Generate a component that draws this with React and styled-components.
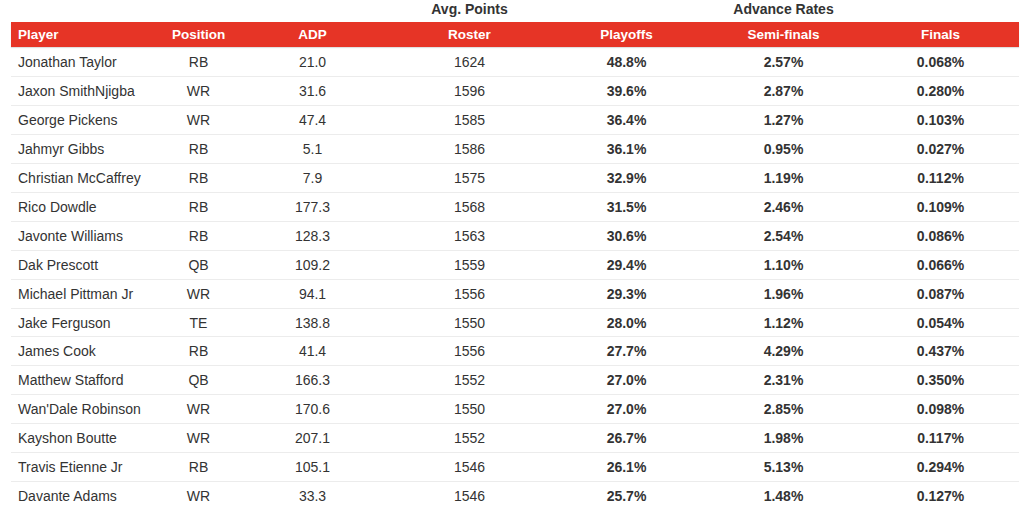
import React from "react";
import styled, { createGlobalStyle } from "styled-components";

const GlobalStyle = createGlobalStyle`
  html, body {
    margin: 0;
    padding: 0;
    background: #fff;
  }
  body {
    font-family: "Liberation Sans", Arial, Helvetica, sans-serif;
    color: #333;
  }
`;

const Wrapper = styled.div`
  padding: 0 5px 0 11px;
`;

const Table = styled.table`
  width: 1008px;
  border-collapse: collapse;
  table-layout: fixed;
  font-size: 14px;
`;

const GroupRow = styled.tr`
  height: 22px;
`;

const GroupCell = styled.th`
  padding: 0 0 5px;
  font-weight: bold;
  font-size: 14px;
  color: #333;
  text-align: center;
  vertical-align: middle;
`;

const HeadRow = styled.tr`
  height: 25px;
  background: #e63426;
  box-shadow: 0 1px 1px rgba(0, 0, 0, 0.12);
`;

const HeadCell = styled.th`
  padding: 0 7px;
  color: #fff;
  font-weight: bold;
  font-size: 13.5px;
  text-align: ${(p) => (p.$left ? "left" : "center")};
  vertical-align: middle;
`;

const Row = styled.tr`
  height: ${(p) => (p.$first ? "29.7px" : "28.93px")};
  border-top: ${(p) => (p.$first ? "none" : "1px solid #ececec")};
`;

const Cell = styled.td`
  padding: 0 7px;
  color: #333;
  font-size: 14px;
  font-weight: ${(p) => (p.$bold ? "bold" : "normal")};
  text-align: ${(p) => (p.$left ? "left" : "center")};
  vertical-align: middle;
  white-space: nowrap;
`;

const columns = [
  { key: "player", label: "Player", width: 152, left: true },
  { key: "pos", label: "Position", width: 71 },
  { key: "adp", label: "ADP", width: 157 },
  { key: "roster", label: "Roster", width: 157 },
  { key: "playoffs", label: "Playoffs", width: 157, bold: true },
  { key: "semis", label: "Semi-finals", width: 157, bold: true },
  { key: "finals", label: "Finals", width: 157, bold: true },
];

const rows = [
  ["Jonathan Taylor", "RB", "21.0", "1624", "48.8%", "2.57%", "0.068%"],
  ["Jaxon SmithNjigba", "WR", "31.6", "1596", "39.6%", "2.87%", "0.280%"],
  ["George Pickens", "WR", "47.4", "1585", "36.4%", "1.27%", "0.103%"],
  ["Jahmyr Gibbs", "RB", "5.1", "1586", "36.1%", "0.95%", "0.027%"],
  ["Christian McCaffrey", "RB", "7.9", "1575", "32.9%", "1.19%", "0.112%"],
  ["Rico Dowdle", "RB", "177.3", "1568", "31.5%", "2.46%", "0.109%"],
  ["Javonte Williams", "RB", "128.3", "1563", "30.6%", "2.54%", "0.086%"],
  ["Dak Prescott", "QB", "109.2", "1559", "29.4%", "1.10%", "0.066%"],
  ["Michael Pittman Jr", "WR", "94.1", "1556", "29.3%", "1.96%", "0.087%"],
  ["Jake Ferguson", "TE", "138.8", "1550", "28.0%", "1.12%", "0.054%"],
  ["James Cook", "RB", "41.4", "1556", "27.7%", "4.29%", "0.437%"],
  ["Matthew Stafford", "QB", "166.3", "1552", "27.0%", "2.31%", "0.350%"],
  ["Wan'Dale Robinson", "WR", "170.6", "1550", "27.0%", "2.85%", "0.098%"],
  ["Kayshon Boutte", "WR", "207.1", "1552", "26.7%", "1.98%", "0.117%"],
  ["Travis Etienne Jr", "RB", "105.1", "1546", "26.1%", "5.13%", "0.294%"],
  ["Davante Adams", "WR", "33.3", "1546", "25.7%", "1.48%", "0.127%"],
];

export default function App() {
  return (
    <>
      <GlobalStyle />
      <Wrapper>
        <Table>
          <colgroup>
            {columns.map((c) => (
              <col key={c.key} style={{ width: c.width }} />
            ))}
          </colgroup>
          <thead>
            <GroupRow>
              <GroupCell colSpan={3} />
              <GroupCell>Avg. Points</GroupCell>
              <GroupCell colSpan={3}>Advance Rates</GroupCell>
            </GroupRow>
            <HeadRow>
              {columns.map((c) => (
                <HeadCell key={c.key} $left={c.left}>
                  {c.label}
                </HeadCell>
              ))}
            </HeadRow>
          </thead>
          <tbody>
            {rows.map((r, i) => (
              <Row key={r[0]} $first={i === 0}>
                {r.map((v, j) => (
                  <Cell key={j} $left={columns[j].left} $bold={columns[j].bold}>
                    {v}
                  </Cell>
                ))}
              </Row>
            ))}
          </tbody>
        </Table>
      </Wrapper>
    </>
  );
}
